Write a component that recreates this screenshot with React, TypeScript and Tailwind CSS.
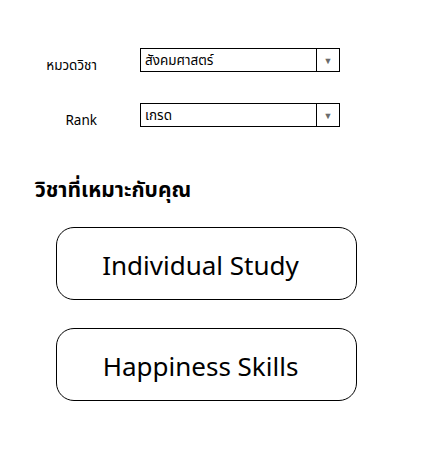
const font = { fontFamily: '"Noto Sans", "Noto Sans Thai", "Liberation Sans", sans-serif' }

function Select({ value }: { value: string }) {
  return (
    <div className="flex h-6 w-[200px] items-stretch border border-black bg-white">
      <div className="flex flex-1 items-center pl-1 text-[13.5px] text-black">{value}</div>
      <div className="flex w-[23px] items-center justify-center border-l border-black">
        <span className="text-[9px] leading-none text-[#6b6b6b]">▼</span>
      </div>
    </div>
  )
}

export default function App() {
  const rows = [
    { label: "หมวดวิชา", value: "สังคมศาสตร์" },
    { label: "Rank", value: "เกรด" },
  ]
  const courses = ["Individual Study", "Happiness Skills"]

  return (
    <div className="min-h-[467px] w-[435px] bg-white text-black" style={font}>
      <div className="flex flex-col gap-[31px] pt-12">
        {rows.map((r) => (
          <div key={r.label} className="flex h-6 items-start">
            <div className="mt-[9px] w-[97px] text-right text-[13.5px] leading-4">{r.label}</div>
            <div className="ml-[43px]">
              <Select value={r.value} />
            </div>
          </div>
        ))}
      </div>

      <h2 className="mt-[47px] pl-[35px] text-[21px] font-bold">วิชาที่เหมาะกับคุณ</h2>

      <div className="mt-[21px] flex flex-col gap-[28px] pl-14">
        {courses.map((c) => (
          <button
            key={c}
            className="flex h-[73px] w-[301px] items-center justify-center rounded-[18px] border border-black bg-white pr-3 pt-1 text-[26px]"
          >
            {c}
          </button>
        ))}
      </div>
    </div>
  )
}
